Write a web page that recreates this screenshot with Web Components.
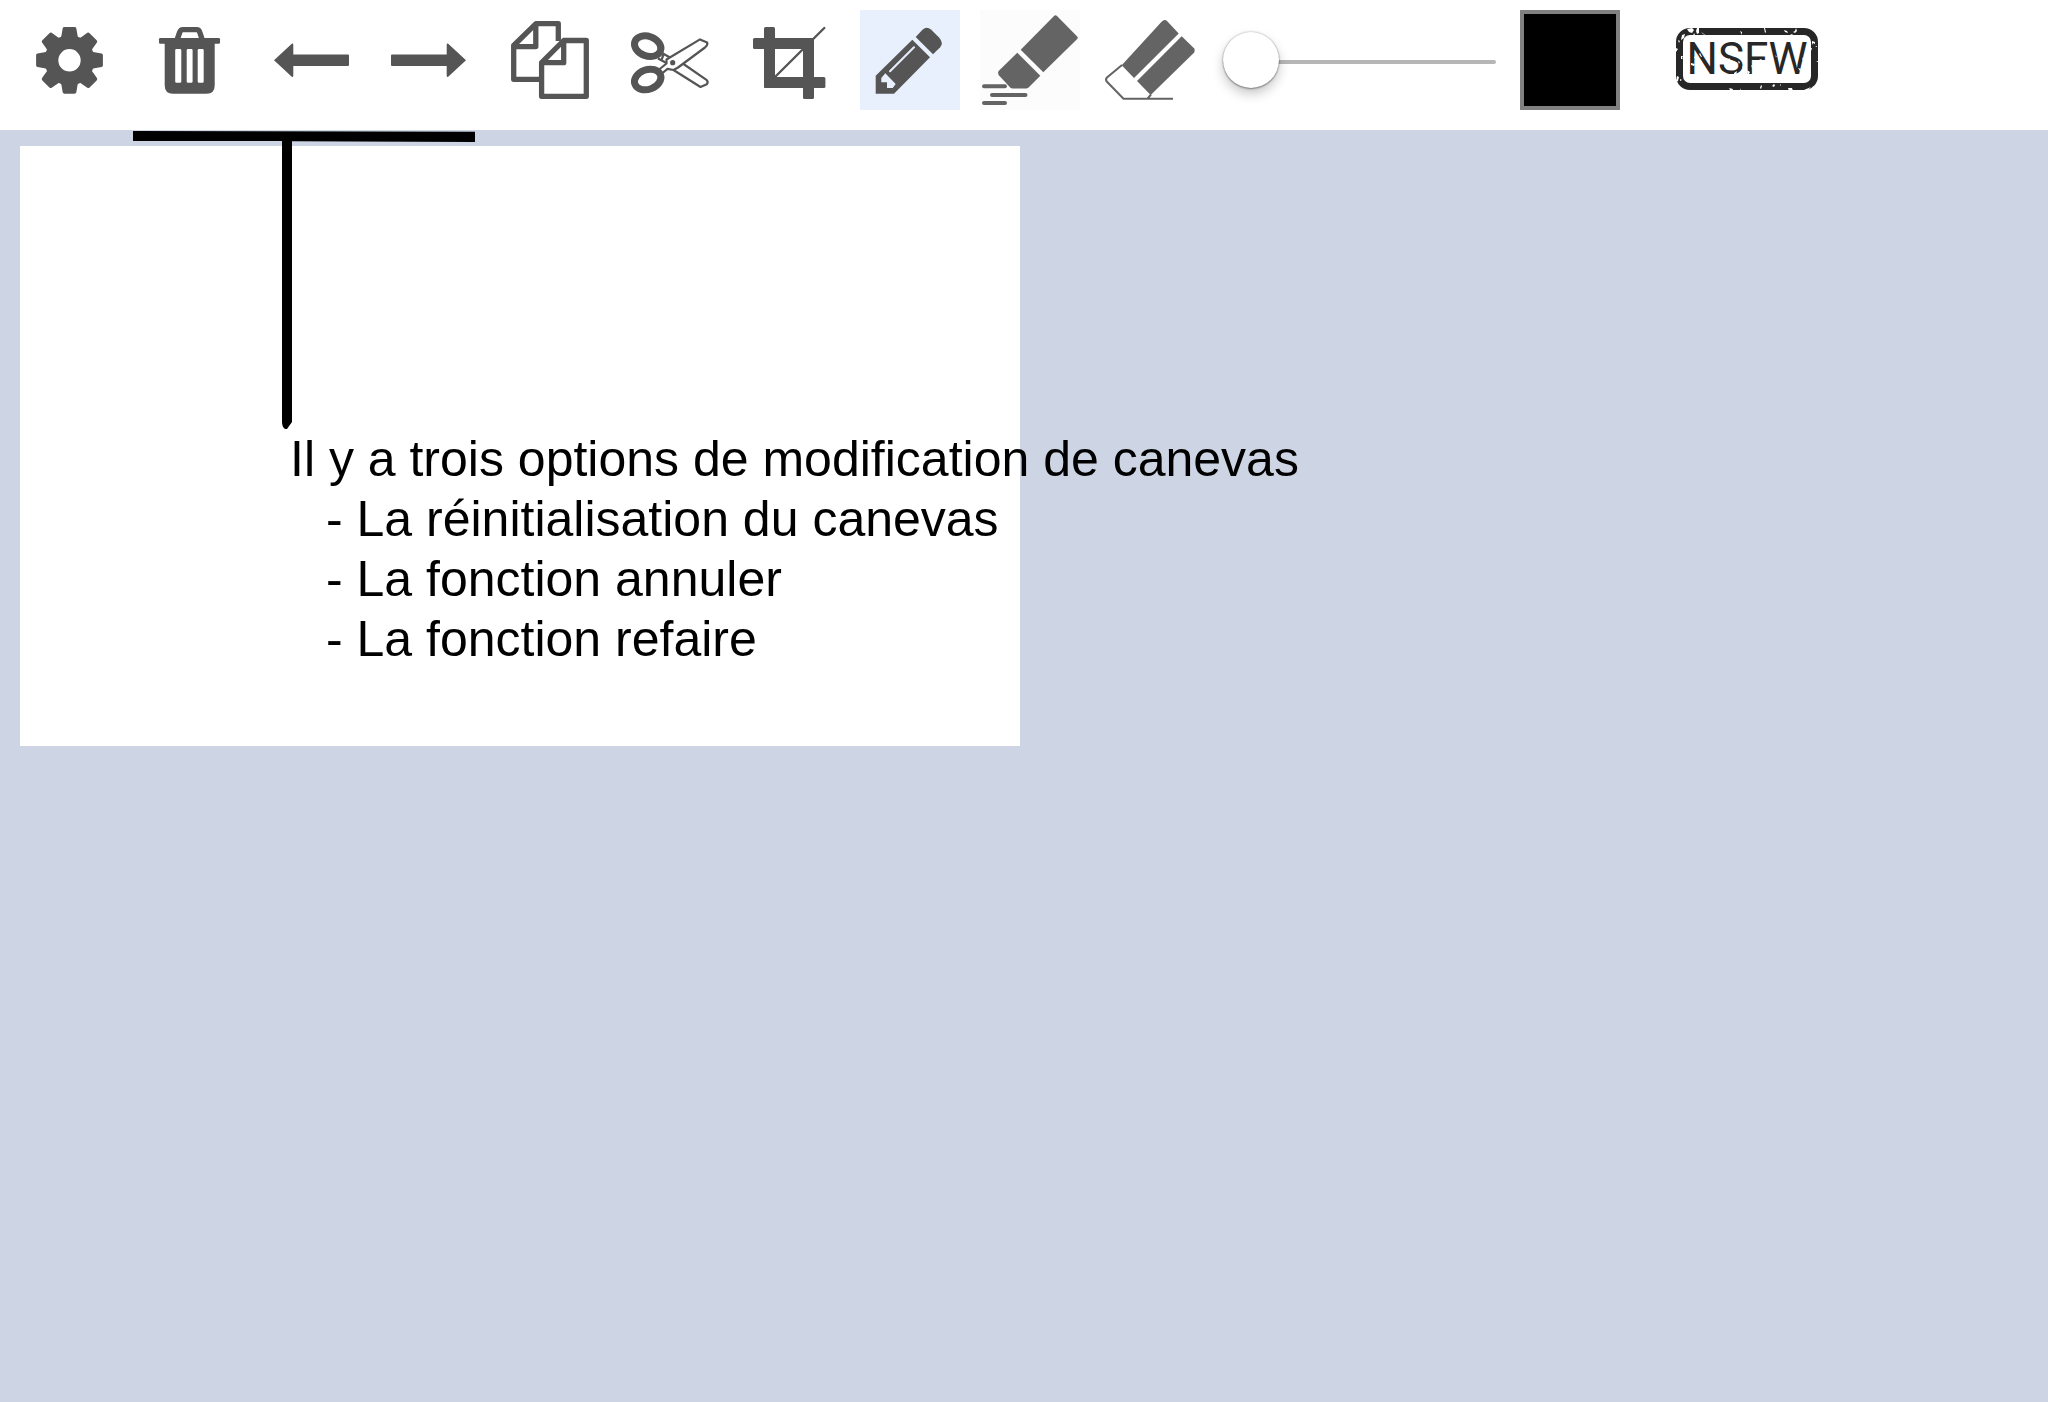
<!DOCTYPE html>
<html lang="fr">
<head>
<meta charset="utf-8">
<title>Éditeur de dessin</title>
<style>
html, body { margin: 0; height: 100%; }
body { background: #cdd4e4; font-family: "Liberation Sans", Arial, sans-serif; color: #000; }
</style>
</head>
<body>
<paint-app></paint-app>
<script>
const ICONS = {
  gear: `<g transform="translate(49.5 50.3)"><path fill-rule="evenodd" d="M0-25A25 25 0 1 1 0 25A25 25 0 1 1 0-25ZM0-11.2A11.2 11.2 0 1 0 0 11.2A11.2 11.2 0 1 0 0-11.2Z"/>
    ${[0,45,90,135,180,225,270,315].map(a => `<path transform="rotate(${a})" d="M-9.5-21Q-8.3-23-8-25L-6.8-32Q-6.5-33.4-5-33.4H5Q6.5-33.4 6.8-32L8-25Q8.3-23 9.5-21Z"/>`).join('')}</g>`,
  trash: `<path d="M37.4 29L39.8 22Q40.6 19.6 43 19.6H56.5Q59 19.6 59.7 22L62 29" fill="none" stroke="currentColor" stroke-width="5.4"/>
    <rect x="19" y="28" width="61" height="5.8" rx="1.2"/>
    <path fill-rule="evenodd" d="M24.7 32H74.7V75.5Q74.7 83.7 66.5 83.7H33Q24.7 83.7 24.7 75.5ZM36.5 39Q35.2 39 35.2 40.3V71.4Q35.2 72.7 36.5 72.7H40Q41.3 72.7 41.3 71.4V40.3Q41.3 39 40 39ZM48 39Q46.7 39 46.7 40.3V71.4Q46.7 72.7 48 72.7H51.3Q52.6 72.7 52.6 71.4V40.3Q52.6 39 51.3 39ZM59 39Q57.7 39 57.7 40.3V71.4Q57.7 72.7 59 72.7H62.4Q63.7 72.7 63.7 71.4V40.3Q63.7 39 62.4 39Z"/>`,
  undo: `<path d="M14 50.3L31.8 33.8Q33.3 33 33.3 35V44.4H88Q89 44.4 89 45.4V55Q89 56 88 56H33.3V65.5Q33.3 67.5 31.8 66.8Z"/>`,
  redo: `<path d="M86 50.3L68.2 33.8Q66.7 33 66.7 35V44.4H12Q11 44.4 11 45.4V55Q11 56 12 56H66.7V65.5Q66.7 67.5 68.2 66.8Z"/>`,
  copy: `<g fill="none" stroke="currentColor" stroke-width="5.3" stroke-linejoin="round">
    <path d="M58.3 31V13.7H36L13.7 35.5V69.3H41M35.8 14V36.6H14"/>
    <path d="M63.7 30.5H86.3V86.3H41.6V52.6ZM63.7 31V52.7H42"/></g>`,
  scissors: `<g fill="none" stroke="currentColor" stroke-linejoin="round">
    <ellipse cx="27.7" cy="36.2" rx="13.6" ry="9.8" transform="rotate(20 27.7 36.2)" stroke-width="7"/>
    <ellipse cx="27.7" cy="69.5" rx="13.6" ry="9.8" transform="rotate(-20 27.7 69.5)" stroke-width="7"/>
    <g stroke-width="2.2"><path d="M46.5 49.5L80 29.4L87.2 32.6Q88 35 85 37.5L58 57.5L53.5 60L47.5 58.8L42 63.5L38.5 60L46.5 53.5Z"/>
    <path d="M63.5 54L86.8 70.2Q88.5 72 86.8 74.2L80.5 77L53.5 60M42 43L50 47.5M38 48.5L46.5 53M43.5 44.5L41.5 50"/></g>
    <circle cx="52.7" cy="52.7" r="2.6" fill="currentColor" stroke="none"/></g>`,
  crop: `<rect x="24" y="17" width="11" height="61" rx="1.5"/><rect x="13" y="28" width="61" height="11" rx="1.5"/>
    <rect x="63" y="28" width="11" height="61" rx="1.5"/><rect x="24" y="67" width="61.4" height="11" rx="1.5"/>
    <path d="M84.3 18L34 68" stroke="currentColor" stroke-width="2.4" stroke-linecap="round"/>`,
  pencil: `<path fill-rule="evenodd" d="M15.7 65.7L52.3 29.7L70 47.3L34 83.7H15.7ZM25.3 63.3L21.3 68V72.3H27V78H32.7L35.7 74Z"/>
    <path d="M54 37.3L30 61.3" stroke="#e8f0fe" stroke-width="2" stroke-linecap="round"/>
    <path d="M55.7 27L62.5 19.8Q66.5 16 71 19.5L79.3 27.8Q83.8 33 80.2 37.2L73 44.3Z"/>`,
  marker: `<g fill="#646464"><path d="M40.7 39.7L74 6Q75.5 4.5 77 6L97.2 26.4Q98.5 27.7 97.2 29L63.3 62.3Z"/>
    <path d="M37.3 42.7L60.3 65.7L48.3 77.7L46.5 78.4H32L30 77.2L18.6 65Q17.6 62.5 18.6 61Z"/></g>
    <path d="M4 76.2H25M12 85H45.5M4 93H25" stroke="#646464" stroke-width="4" stroke-linecap="round"/>`,
  eraser: `<g fill="#646464"><path d="M21.7 55.3L61.8 11.6Q64.5 8.6 67.5 11.4L78.7 23.5L34 68Z"/>
    <path d="M81.7 26.3L94 38.2Q95.8 40.4 94.2 42.4L50.7 85L37 71Z"/></g>
    <path d="M22 55L7 67.5Q5 69.5 7 71.8L23.5 88.7H73M51 84.5L47.5 88.7" fill="none" stroke="#646464" stroke-width="2"/>`
};

class PaintTool extends HTMLElement {
  connectedCallback() {
    const root = this.attachShadow({ mode: 'open' });
    root.innerHTML = `<style>
      :host { display: block; flex: none; }
      button { display: block; width: 100px; height: 100px; padding: 0; border: 0; background: none; color: #555; cursor: pointer; }
      :host([active]) button { background: #e8f0fe; }
      :host([icon="marker"]) button { background: #fcfcfc; }
      svg { display: block; width: 100%; height: 100%; fill: currentColor; }
    </style>
    <button type="button" aria-label="${this.getAttribute('label')}" aria-pressed="${this.hasAttribute('active')}">
      <svg viewBox="0 0 100 100" aria-hidden="true">${ICONS[this.getAttribute('icon')]}</svg></button>`;
  }
}
customElements.define('paint-tool', PaintTool);

class SizeSlider extends HTMLElement {
  connectedCallback() {
    this.attachShadow({ mode: 'open' }).innerHTML = `<style>
      :host { display: flex; flex: none; width: 280px; height: 100px; align-items: center; padding: 4px 4px 0 3px; box-sizing: border-box; }
      input { -webkit-appearance: none; appearance: none; flex: 1; min-width: 0; margin: 0; height: 4px; background: #b6b6b6; border-radius: 2px; outline: 0; }
      input::-webkit-slider-runnable-track { height: 4px; }
      input::-webkit-slider-thumb { -webkit-appearance: none; width: 56px; height: 56px; margin-top: -28px; border-radius: 50%; background: #fff;
        box-shadow: 0 0 2px rgba(0,0,0,.3), 0 1px 2px rgba(0,0,0,.35), 0 6px 12px rgba(0,0,0,.22); }
    </style><input type="range" min="1" max="50" value="1" aria-label="Épaisseur du trait">`;
  }
}
customElements.define('size-slider', SizeSlider);

class ColorWell extends HTMLElement {
  connectedCallback() {
    this.attachShadow({ mode: 'open' }).innerHTML = `<style>
      :host { display: block; flex: none; }
      input { -webkit-appearance: none; appearance: none; display: block; box-sizing: border-box; width: 100px; height: 100px; margin: 0; padding: 0; border: 4px solid #808080; background: #000; }
      input::-webkit-color-swatch-wrapper { padding: 0; }
      input::-webkit-color-swatch { border: 0; border-radius: 0; }
    </style><input type="color" value="#000000" aria-label="Couleur">`;
  }
}
customElements.define('color-well', ColorWell);

class StampButton extends HTMLElement {
  connectedCallback() {
    this.attachShadow({ mode: 'open' }).innerHTML = `<style>
      :host { display: flex; flex: none; padding: 0 36px 2px; }
      button { position: relative; display: flex; align-items: center; justify-content: center; box-sizing: border-box; width: 142px; height: 62px; padding: 0; border: 7px solid #272727; border-radius: 14px; background: #fff; color: #272727; cursor: pointer;
        font: 44px/48px Roboto, "Liberation Sans", sans-serif; }
      svg { position: absolute; left: -7px; top: -7px; width: 142px; height: 63px; }
    </style><button type="button"><slot></slot>
    <svg viewBox="0 0 142 63" fill="#fff" aria-hidden="true">
      <path d="M11 1l5-1 2 2-2 3-3-1zM21 0h2v5l-2 1-1-3zM18 5l1 2-2 1zM6 7l3-1-1 4-3 2zM2 12l2 1-1 2zM0 20l2 1-2 3zM5 28l2 0-1 2 1 1-2 0zM1 48l2 1-1 4-2 1zM4 51l2 1-2 1zM25 4l6 4-4-2zM64 3l2 1 0 3-1-2zM88 0h1l1 4-1 1zM108 2l3 1 1 2-3-1zM117 4l2-1 1-3 1 3-2 2zM114 6h3l-1 1zM136 13l3 1 0 2-2-1-1 2zM139 18h2v1zM135 20h1v3zM53 60l4 1-1 2-2-1zM40 62h3v1zM64 60l1 3h-1zM84 60l1-3 1 1-1 3zM96 58l2-2 1 1-1 2zM104 56l1 1-1 1zM112 60l4 0 1 3h-4zM128 62l7-3-3 3zM137 58l1 1-2 2zM140 33h2v1z"/>
      <path d="M15 35l4 1-1 2-3-1zM24 25l2 4-1 0-2-3zM18 28l1 2h-1zM54 30l-3 2 2 1zM58 45l3-2-1 4-2-1zM71 42l3 2-2 4zM75 37l3 2-2 1zM78 32l3 1-1 1zM83 31l3 0-1 1zM62 33l2 1-1 2zM73 47l3 1-1 2zM122 40l3 1-1 2zM127 29l1 2-2 1zM99 27l2 2h-1zM66 38l2 1-1 2z"/>
    </svg></button>`;
  }
}
customElements.define('stamp-button', StampButton);

class PaintToolbar extends HTMLElement {
  connectedCallback() {
    this.attachShadow({ mode: 'open' }).innerHTML = `<style>
      :host { display: flex; align-items: center; gap: 20px; padding: 10px 20px 20px; background: #fff; }
    </style><slot></slot>`;
  }
}
customElements.define('paint-toolbar', PaintToolbar);

class DrawingSheet extends HTMLElement {
  connectedCallback() {
    this.attachShadow({ mode: 'open' }).innerHTML = `<style>
      :host { display: block; position: relative; box-sizing: border-box; width: 1000px; max-width: calc(100% - 20px); height: 600px; margin: 16px 20px; padding: 283px 0 0 270px; background: #fff; font-size: 50px; line-height: 60px; white-space: nowrap; }
      svg { position: absolute; left: 0; top: -16px; width: 600px; height: 310px; }
      p, ul { margin: 0; padding: 0; list-style: none; }
      ul { padding-left: 36px; }
    </style>
    <svg viewBox="20 130 600 310" aria-hidden="true">
      <path d="M133 131L475 131.7V142L292 141.3V422L287 429H285Q282 427 282 422V141L133 141Z"/></svg>
    <p>Il y a trois options de modification de canevas</p>
    <ul><li>- La réinitialisation du canevas</li><li>- La fonction annuler</li><li>- La fonction refaire</li></ul>`;
  }
}
customElements.define('drawing-sheet', DrawingSheet);

class PaintApp extends HTMLElement {
  connectedCallback() {
    this.attachShadow({ mode: 'open' }).innerHTML = `<style>
      :host { display: flex; flex-direction: column; min-height: 100%; overflow: hidden; }
      main { display: flow-root; flex: 1; }
    </style>
    <paint-toolbar role="toolbar">
      <paint-tool icon="gear" label="Paramètres"></paint-tool>
      <paint-tool icon="trash" label="Réinitialiser"></paint-tool>
      <paint-tool icon="undo" label="Annuler"></paint-tool>
      <paint-tool icon="redo" label="Refaire"></paint-tool>
      <paint-tool icon="copy" label="Copier"></paint-tool>
      <paint-tool icon="scissors" label="Couper"></paint-tool>
      <paint-tool icon="crop" label="Rogner"></paint-tool>
      <paint-tool icon="pencil" label="Crayon" active></paint-tool>
      <paint-tool icon="marker" label="Surligneur"></paint-tool>
      <paint-tool icon="eraser" label="Gomme"></paint-tool>
      <size-slider></size-slider>
      <color-well></color-well>
      <stamp-button>NSFW</stamp-button>
    </paint-toolbar>
    <main><drawing-sheet></drawing-sheet></main>`;
  }
}
customElements.define('paint-app', PaintApp);
</script>
</body>
</html>
